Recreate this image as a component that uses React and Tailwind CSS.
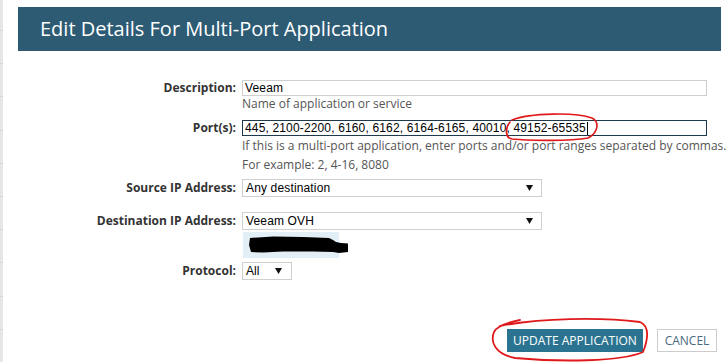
import React from "react";

function Arrow() {
  return (
    <svg width="7" height="6" viewBox="0 0 7 6" className="shrink-0">
      <polygon points="0,0 7,0 3.5,6" fill="#111" />
    </svg>
  );
}

function Row({ label, children, className = "" }) {
  return (
    <div className={"flex items-center " + className}>
      <div className="w-[239px] text-right pr-[6px] font-bold text-[12px] text-[#333] leading-[16px]">
        {label}
      </div>
      {children}
    </div>
  );
}

export default function App() {
  const strip = [];
  for (let i = 0; i < 10; i++) strip.push(i);
  return (
    <div className="relative flex w-[727px] h-[362px] overflow-hidden bg-white font-['Open_Sans',sans-serif]">
      <div className="w-[3px] shrink-0 bg-[#e6e6e6] flex flex-col pt-[30px]">
        {strip.map((i) => (
          <div key={i} className="h-[37px] border-t border-[#d6d6d6]" />
        ))}
      </div>
      <div className="flex flex-col">
        <div className="mt-[7px] ml-[15px] w-[703px] h-[44px] bg-[#2d5b74] flex items-center pl-[22px] text-white text-[20px]">
          Edit Details For Multi-Port Application
        </div>

        <div className="flex flex-col mt-[29px]">
          <Row label="Description:">
            <div className="w-[465px] h-[16px] border border-[#cfcfcf] flex items-center pl-[2px] font-['Liberation_Sans',Arial,sans-serif] text-[12px] tracking-[0.15px] text-black">
              Veeam
            </div>
          </Row>
          <div className="pl-[239px] text-[12px] leading-[16px] text-[#555]">
            Name of application or service
          </div>

          <Row label="Port(s):" className="mt-[8px]">
            <div className="w-[465px] h-[16px] border border-[#1f3a4c] flex items-center pl-[2px] font-['Liberation_Sans',Arial,sans-serif] text-[12px] tracking-[0.15px] text-black whitespace-nowrap">
              445, 2100-2200, 6160, 6162, 6164-6165, 40010, 49152-65535
              <span className="inline-block w-[1px] h-[13px] bg-black ml-[1px]" />
            </div>
          </Row>
          <div className="pl-[239px] text-[12px] leading-[19px] text-[#555] whitespace-nowrap">
            <div>If this is a multi-port application, enter ports and/or port ranges separated by commas.</div>
            <div>For example: 2, 4-16, 8080</div>
          </div>

          <Row label="Source IP Address:" className="mt-[5px]">
            <div className="w-[300px] h-[18px] border border-[#cfcfcf] flex items-center justify-between pl-[3px] pr-[8px] font-['Liberation_Sans',Arial,sans-serif] text-[12px] tracking-[0.15px] text-black">
              <span>Any destination</span>
              <Arrow />
            </div>
          </Row>

          <Row label="Destination IP Address:" className="mt-[15px]">
            <div className="w-[300px] h-[18px] border border-[#cfcfcf] flex items-center justify-between pl-[3px] pr-[8px] font-['Liberation_Sans',Arial,sans-serif] text-[12px] tracking-[0.15px] text-black">
              <span>Veeam OVH</span>
              <Arrow />
            </div>
          </Row>

          <div className="ml-[240px] mt-[2px] w-[96px] h-[26px] bg-[#e3eff7] relative">
            <svg width="110" height="26" viewBox="0 0 110 26" className="absolute left-0 top-0 overflow-visible">
              <path
                d="M7 6 L30 4.5 L60 5 L86 6 L90 8 L93 10 L98 11 L105 11.5 L105 20 L96 21 L90 20 L70 19.5 L40 19.5 L20 20.5 L8 20 L6 13 Z"
                fill="#000"
              />
            </svg>
          </div>

          <Row label="Protocol:" className="mt-[4px]">
            <div className="w-[50px] h-[18px] border border-[#cfcfcf] flex items-center justify-between pl-[3px] pr-[9px] font-['Liberation_Sans',Arial,sans-serif] text-[12px] text-black">
              <span>All</span>
              <Arrow />
            </div>
          </Row>

          <div className="flex justify-end items-center mt-[49px] w-[714px] gap-[14px]">
            <div className="w-[136px] h-[23px] bg-[#2a7491] text-white text-[12px] flex items-center justify-center">
              UPDATE APPLICATION
            </div>
            <div className="w-[60px] h-[23px] border border-[#cccccc] bg-white text-[#4a6a80] text-[12px] flex items-center justify-center">
              CANCEL
            </div>
          </div>
        </div>
      </div>

      <svg className="absolute left-0 top-0 pointer-events-none" width="727" height="362" viewBox="0 0 727 362">
        <path
          d="M512 120 C530 113, 575 112, 592 118 C600 122, 598 133, 588 138 C570 141, 530 141, 512 139 C505 138, 505 128, 510 122"
          fill="none"
          stroke="#e0191b"
          strokeWidth="1.6"
          strokeLinecap="round"
        />
        <path
          d="M500 326 C540 318, 600 317, 640 322 C650 326, 648 340, 643 352 C620 362, 560 362, 515 358 C495 354, 490 342, 494 332 C497 326, 510 322, 520 320"
          fill="none"
          stroke="#e0191b"
          strokeWidth="1.8"
          strokeLinecap="round"
        />
      </svg>
    </div>
  );
}
